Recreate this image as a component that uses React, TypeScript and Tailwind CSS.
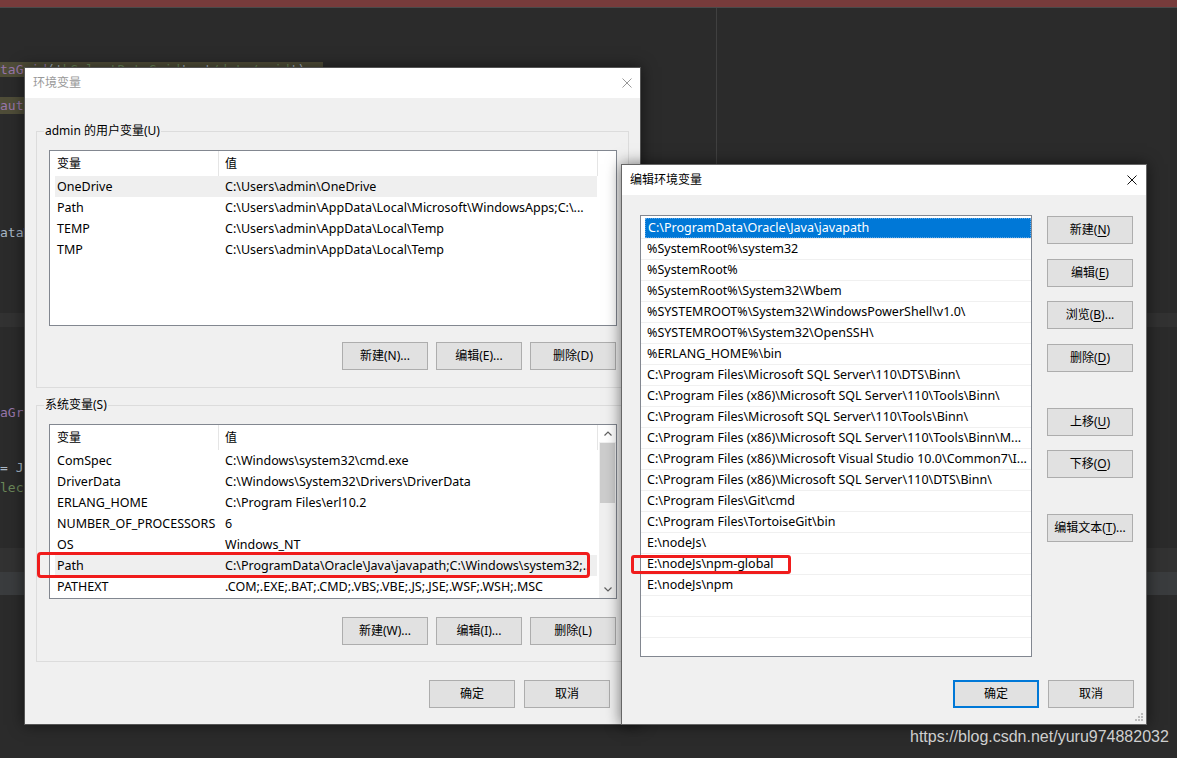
import React from 'react';

// Windows-ish UI font: latin + CJK fallback
const UI = "font-['Noto_Sans','Noto_Sans_CJK_SC',sans-serif]";

type Row = [string, string];

const userVars: Row[] = [
  ['OneDrive', 'C:\\Users\\admin\\OneDrive'],
  ['Path', 'C:\\Users\\admin\\AppData\\Local\\Microsoft\\WindowsApps;C:\\...'],
  ['TEMP', 'C:\\Users\\admin\\AppData\\Local\\Temp'],
  ['TMP', 'C:\\Users\\admin\\AppData\\Local\\Temp'],
];

const sysVars: Row[] = [
  ['ComSpec', 'C:\\Windows\\system32\\cmd.exe'],
  ['DriverData', 'C:\\Windows\\System32\\Drivers\\DriverData'],
  ['ERLANG_HOME', 'C:\\Program Files\\erl10.2'],
  ['NUMBER_OF_PROCESSORS', '6'],
  ['OS', 'Windows_NT'],
  ['Path', 'C:\\ProgramData\\Oracle\\Java\\javapath;C:\\Windows\\system32;..'],
  ['PATHEXT', '.COM;.EXE;.BAT;.CMD;.VBS;.VBE;.JS;.JSE;.WSF;.WSH;.MSC'],
];

const pathEntries = [
  'C:\\ProgramData\\Oracle\\Java\\javapath',
  '%SystemRoot%\\system32',
  '%SystemRoot%',
  '%SystemRoot%\\System32\\Wbem',
  '%SYSTEMROOT%\\System32\\WindowsPowerShell\\v1.0\\',
  '%SYSTEMROOT%\\System32\\OpenSSH\\',
  '%ERLANG_HOME%\\bin',
  'C:\\Program Files\\Microsoft SQL Server\\110\\DTS\\Binn\\',
  'C:\\Program Files (x86)\\Microsoft SQL Server\\110\\Tools\\Binn\\',
  'C:\\Program Files\\Microsoft SQL Server\\110\\Tools\\Binn\\',
  'C:\\Program Files (x86)\\Microsoft SQL Server\\110\\Tools\\Binn\\M...',
  'C:\\Program Files (x86)\\Microsoft Visual Studio 10.0\\Common7\\I...',
  'C:\\Program Files (x86)\\Microsoft SQL Server\\110\\DTS\\Binn\\',
  'C:\\Program Files\\Git\\cmd',
  'C:\\Program Files\\TortoiseGit\\bin',
  'E:\\nodeJs\\',
  'E:\\nodeJs\\npm-global',
  'E:\\nodeJs\\npm',
  '',
  '',
  '',
];

const CloseX = ({ color }: { color: string }) => (
  <svg width="10" height="10" viewBox="0 0 10 10">
    <path d="M0.5 0.5 L9.5 9.5 M9.5 0.5 L0.5 9.5" stroke={color} strokeWidth="1" fill="none" />
  </svg>
);

const Btn = ({ children, primary = false }: { children: React.ReactNode; primary?: boolean }) => (
  <div
    className={`flex h-[28px] w-[86px] items-center justify-center bg-[#e1e1e1] text-[12px] text-black ${
      primary ? 'border-2 border-[#0078d7]' : 'border border-[#adadad]'
    }`}
  >
    {children}
  </div>
);

const U = ({ children }: { children: React.ReactNode }) => (
  <span className="underline underline-offset-2">{children}</span>
);

const GroupBox = ({ label, children, className }: { label: string; children: React.ReactNode; className?: string }) => (
  <div className={`relative border border-[#dcdcdc] ${className ?? ''}`}>
    <span className="absolute left-[7px] top-[-9px] bg-[#f0f0f0] px-px text-[12px] leading-[16px] text-black">{label}</span>
    {children}
  </div>
);

const Chevron = ({ up }: { up?: boolean }) => (
  <svg width="8" height="5" viewBox="0 0 8 5">
    <path d={up ? 'M0.5 4.5 L4 1 L7.5 4.5' : 'M0.5 0.5 L4 4 L7.5 0.5'} stroke="#606060" strokeWidth="1.2" fill="none" />
  </svg>
);

const VarList = ({ rows, selected, scroll, h }: { rows: Row[]; selected: number; scroll?: boolean; h: string }) => (
  <div className={`flex overflow-hidden border border-[#828790] bg-white ${h}`}>
    <div className="w-[548px]">
      <div className="flex h-[25px] text-[12px] text-black">
        <div className="flex h-full w-[169px] items-center border-r border-[#e5e5e5] pl-[7px]">变量</div>
        <div className="flex h-full w-[379px] items-center border-r border-[#e5e5e5] pl-[6px]">值</div>
      </div>
      {rows.map(([k, v], i) => (
        <div
          key={k + i}
          className={`ml-[5px] flex h-[21px] w-[542px] items-center pt-px text-[12.5px] text-black ${i === selected ? 'bg-[#efefef]' : ''}`}
        >
          <div className="w-[170px] shrink-0 whitespace-nowrap pl-[2px]">{k}</div>
          <div className="whitespace-nowrap">{v}</div>
        </div>
      ))}
    </div>
    <div className="flex-1" />
    {scroll && (
      <div className="flex w-[17px] flex-col bg-[#f0f0f0]">
        <div className="flex h-[17px] items-center justify-center bg-white">
          <Chevron up />
        </div>
        <div className="mx-px mt-px h-[60px] bg-[#cdcdcd]" />
        <div className="flex-1" />
        <div className="flex h-[17px] items-center justify-center">
          <Chevron />
        </div>
      </div>
    )}
  </div>
);

const Editor = () => (
  <div className="flex flex-col font-['DejaVu_Sans_Mono',monospace] text-[13px] leading-[15px]">
    <div className="h-[7px] bg-[#773b3b]" />
    <div className="h-px bg-[#4a4a4a]" />
    <div className="flex h-[305px]">
      <div className="flex w-[717px] flex-col border-r border-[#404040]">
        <div className="h-[54px]" />
        <div className="h-[15px] w-[323px] whitespace-nowrap bg-[#4f4d38] text-[#9876aa]">
          taGrid<span className="text-[#a9b7c6]">('</span><span className="text-[#6a8759]">bSelectDataGrid</span><span className="text-[#a9b7c6]">', '</span><span className="text-[#6a8759]">/data/grid</span><span className="text-[#a9b7c6]">')</span>
        </div>
        <div className="h-[20px]" />
        <div className="flex h-[17px] w-[60px] items-center bg-[#4f4d38] text-[#9876aa]">authority</div>
        <div className="h-[111px]" />
        <div className="h-[15px] text-[#a9b7c6]">ataMap</div>
      </div>
      <div className="flex-1" />
    </div>
    <div className="h-[14px] bg-[#323232]" />
    <div className="h-[78px]" />
    <div className="h-[15px] text-[#9876aa]">aGrid</div>
    <div className="h-[40px]" />
    <div className="h-[15px] whitespace-pre text-[#a9b7c6]">= JSON</div>
    <div className="h-[5px]" />
    <div className="h-[15px] text-[#6a8759]">lect</div>
    <div className="h-[53px]" />
    <div className="h-[24px] bg-[#323232]" />
    <div className="h-[23px] bg-[#3a3c3e]" />
  </div>
);

const EnvDialog = () => (
  <div className={`absolute left-[24px] top-[67px] flex h-[658px] w-[617px] flex-col border border-[#555] bg-[#f0f0f0] shadow-[0_0_14px_rgba(0,0,0,0.55)] ${UI}`}>
    <div className="flex h-[30px] items-center justify-between bg-white pl-[8px] pr-[8px]">
      <span className="text-[12px] text-[#999]">环境变量</span>
      <CloseX color="#999" />
    </div>
    <div className="flex flex-col px-[11px]">
      <GroupBox label="admin 的用户变量(U)" className="mt-[33px] pb-[17px] pl-[12px] pr-[11px]">
        <div className="mt-[18px]">
          <VarList rows={userVars} selected={0} h="h-[176px]" />
        </div>
        <div className="mt-[16px] flex justify-end gap-[8px] pr-px">
          <Btn>新建(N)...</Btn>
          <Btn>编辑(E)...</Btn>
          <Btn>删除(D)</Btn>
        </div>
      </GroupBox>
      <GroupBox label="系统变量(S)" className="mt-[17px] pb-[16px] pl-[12px] pr-[11px]">
        <div className="mt-[18px]">
          <VarList rows={sysVars} selected={5} scroll h="h-[175px]" />
        </div>
        <div className="mt-[18px] flex justify-end gap-[8px] pr-px">
          <Btn>新建(W)...</Btn>
          <Btn>编辑(I)...</Btn>
          <Btn>删除(L)</Btn>
        </div>
      </GroupBox>
      <div className="mt-[18px] flex justify-end gap-[9px] pr-[19px]">
        <Btn>确定</Btn>
        <Btn>取消</Btn>
      </div>
    </div>
  </div>
);

const EditDialog = () => (
  <div className={`absolute left-[621px] top-[164px] flex h-[561px] w-[526px] flex-col border border-[#666] bg-[#f0f0f0] shadow-[0_0_14px_rgba(0,0,0,0.55)] ${UI}`}>
    <div className="flex h-[30px] items-center justify-between bg-white pl-[8px] pr-[9px]">
      <span className="text-[12px] text-black">编辑环境变量</span>
      <CloseX color="#111" />
    </div>
    <div className="flex pl-[18px] pt-[20px]">
      <div className="h-[442px] w-[392px] overflow-hidden border border-[#828790] bg-white pt-[2px]">
        {pathEntries.map((p, i) => (
          <div key={i} className="flex h-[21px] shrink-0 border-b border-[#f0f0f0] pl-[4px]">
            <div
              className={`flex flex-1 items-center whitespace-nowrap pl-[2px] text-[12.5px] ${
                i === 0 ? 'border border-dotted border-[#5aa6e8] bg-[#0078d7] text-white' : 'text-black'
              }`}
            >
              {p}
            </div>
          </div>
        ))}
      </div>
      <div className="ml-[15px] flex flex-col">
        <div className="mt-px"><Btn>新建(<U>N</U>)</Btn></div>
        <div className="mt-[15px]"><Btn>编辑(<U>E</U>)</Btn></div>
        <div className="mt-[14px]"><Btn>浏览(<U>B</U>)...</Btn></div>
        <div className="mt-[15px]"><Btn>删除(<U>D</U>)</Btn></div>
        <div className="mt-[36px]"><Btn>上移(<U>U</U>)</Btn></div>
        <div className="mt-[14px]"><Btn>下移(<U>O</U>)</Btn></div>
        <div className="mt-[36px]"><Btn>编辑文本(<U>T</U>)...</Btn></div>
      </div>
    </div>
    <div className="mt-[23px] flex justify-end gap-[9px] pr-[12px]">
      <Btn primary>确定</Btn>
      <Btn>取消</Btn>
    </div>
    <svg className="absolute bottom-[3px] right-[3px]" width="9" height="9" viewBox="0 0 9 9">
      {[[7, 1], [4, 4], [7, 4], [1, 7], [4, 7], [7, 7]].map(([x, y], i) => (
        <rect key={i} x={x} y={y} width="2" height="2" fill="#bcbcbc" />
      ))}
    </svg>
  </div>
);

export default function App() {
  return (
    <div className="relative h-[758px] w-[1177px] overflow-hidden bg-[#2b2b2b]">
      <Editor />
      <EnvDialog />
      <EditDialog />
      {/* red annotation boxes */}
      <div className="absolute left-[37px] top-[552px] h-[26px] w-[553px] rounded-[4px] border-[3px] border-[#f01c1c]" />
      <div className="absolute left-[631px] top-[555px] h-[19px] w-[160px] rounded-[3px] border-[3px] border-[#f01c1c]" />
      <div className="absolute left-[910px] top-[728px] font-['Liberation_Sans',Arial,sans-serif] text-[16px] leading-[18px] text-[#cfcfcf]">
        https://blog.csdn.net/yuru974882032
      </div>
    </div>
  );
}
